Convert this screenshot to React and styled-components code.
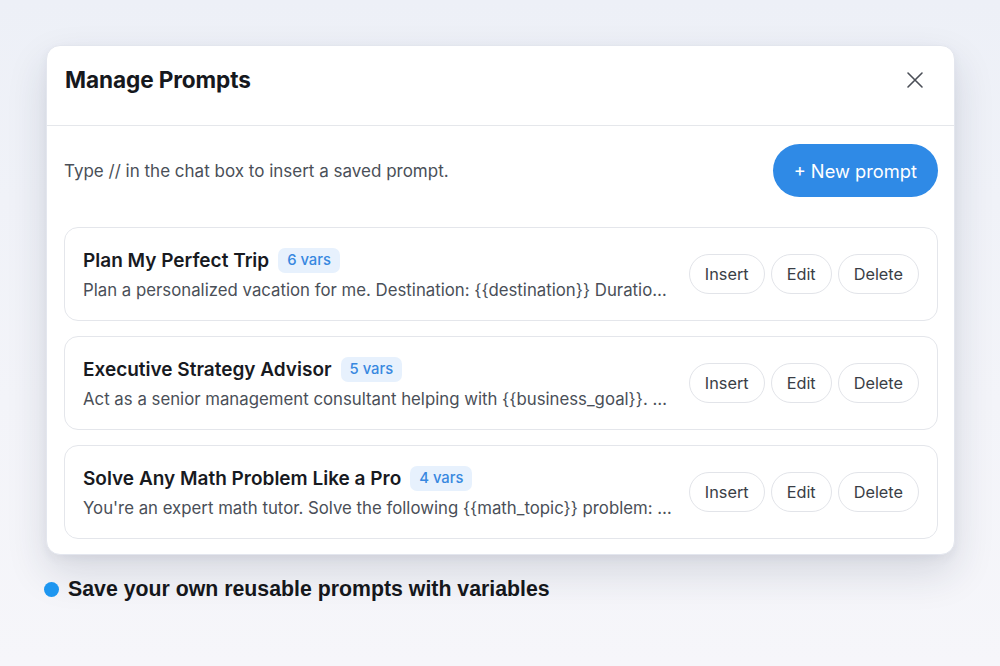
import React from "react";
import styled, { createGlobalStyle } from "styled-components";

const GlobalStyle = createGlobalStyle`
  html, body {
    margin: 0;
    padding: 0;
  }
  body {
    font-family: Inter, "Noto Sans", sans-serif;
    background: linear-gradient(180deg, #edf0f7 0%, #f3f4f9 60%, #f6f6fa 100%);
    min-height: 666px;
  }
`;

const Page = styled.div`
  width: 1000px;
  height: 666px;
  padding: 45px 0 0 46px;
  box-sizing: border-box;
`;

const Modal = styled.div`
  width: 909px;
  background: #fff;
  border-radius: 14px;
  border: 1px solid #e3e6ee;
  box-sizing: border-box;
  box-shadow: 0 18px 40px rgba(30, 40, 70, 0.14), 0 4px 10px rgba(30, 40, 70, 0.05);
  overflow: hidden;
`;

const Header = styled.div`
  height: 80px;
  box-sizing: border-box;
  display: flex;
  align-items: center;
  justify-content: space-between;
  padding: 0 27px 12px 18px;
  border-bottom: 1px solid #e5e7eb;
`;

const Title = styled.h2`
  margin: 0;
  font-size: 22.6px;
  font-weight: 700;
  color: #16181d;
  letter-spacing: -0.1px;
`;

const CloseButton = styled.button`
  border: 0;
  background: none;
  padding: 0;
  width: 24px;
  height: 24px;
  display: flex;
  align-items: center;
  justify-content: center;
  color: #4b4f57;
`;

const Body = styled.div`
  padding: 18px 16px 15px 17px;
`;

const Toolbar = styled.div`
  display: flex;
  align-items: center;
  justify-content: space-between;
  margin-bottom: 30px;
`;

const Hint = styled.p`
  margin: 0;
  font-size: 17px;
  color: #4a4f58;
`;

const PrimaryButton = styled.button`
  height: 53px;
  padding: 0 21px;
  border: 0;
  border-radius: 27px;
  background: #2f8ae6;
  color: #fff;
  font-family: inherit;
  font-size: 18.3px;
  font-weight: 400;
`;

const List = styled.div`
  display: flex;
  flex-direction: column;
  gap: 15px;
`;

const Card = styled.div`
  height: 94px;
  box-sizing: border-box;
  border: 1px solid #e4e6eb;
  border-radius: 14px;
  padding: 0 18px;
  display: flex;
  align-items: center;
  gap: 16px;
`;

const CardMain = styled.div`
  flex: 1;
  min-width: 0;
  display: flex;
  flex-direction: column;
  gap: 6px;
  padding-top: 2px;
`;

const TitleRow = styled.div`
  display: flex;
  align-items: center;
  gap: 9px;
  height: 25px;
`;

const CardTitle = styled.span`
  font-size: 19px;
  font-weight: 600;
  color: #181a1f;
`;

const Badge = styled.span`
  height: 25px;
  line-height: 25px;
  padding: 0 9px;
  border-radius: 7px;
  background: #e7f1fd;
  color: #3788e0;
  font-size: 14.8px;
  font-weight: 500;
`;

const Desc = styled.div`
  font-size: 16.8px;
  line-height: 23px;
  color: #4a4f58;
  white-space: nowrap;
  overflow: hidden;
  text-overflow: ellipsis;
`;

const Actions = styled.div`
  display: flex;
  gap: 6px;
  flex-shrink: 0;
`;

const PillButton = styled.button`
  height: 40px;
  line-height: 38px;
  padding: 0 15px;
  border: 1px solid #e2e4e9;
  border-radius: 20px;
  background: #fff;
  color: #3a3e46;
  font-family: inherit;
  font-size: 16.3px;
`;

const Caption = styled.div`
  display: flex;
  align-items: center;
  gap: 9px;
  margin: 22px 0 0 -2px;
`;

const Dot = styled.span`
  width: 15px;
  height: 15px;
  border-radius: 50%;
  background: #1d96f0;
`;

const CaptionText = styled.span`
  font-family: "Liberation Sans", Arial, sans-serif;
  font-size: 21.3px;
  font-weight: 700;
  color: #15171b;
`;

const prompts = [
  {
    title: "Plan My Perfect Trip",
    vars: 6,
    desc: "Plan a personalized vacation for me. Destination: {{destination}} Duration: {{duration}} Budget: {{budget}}",
  },
  {
    title: "Executive Strategy Advisor",
    vars: 5,
    desc: "Act as a senior management consultant helping with {{business_goal}}. Context: {{context}}",
  },
  {
    title: "Solve Any Math Problem Like a Pro",
    vars: 4,
    desc: "You're an expert math tutor. Solve the following {{math_topic}} problem: {{problem}}",
  },
];

const App = () => {
  return (
    <>
      <GlobalStyle />
      <Page>
        <Modal>
          <Header>
            <Title>Manage Prompts</Title>
            <CloseButton aria-label="Close">
              <svg width="18" height="18" viewBox="0 0 18 18" fill="none">
                <path d="M2 2L16 16M16 2L2 16" stroke="currentColor" strokeWidth="1.6" strokeLinecap="round" />
              </svg>
            </CloseButton>
          </Header>
          <Body>
            <Toolbar>
              <Hint>Type // in the chat box to insert a saved prompt.</Hint>
              <PrimaryButton>+ New prompt</PrimaryButton>
            </Toolbar>
            <List>
              {prompts.map((p) => (
                <Card key={p.title}>
                  <CardMain>
                    <TitleRow>
                      <CardTitle>{p.title}</CardTitle>
                      <Badge>{p.vars} vars</Badge>
                    </TitleRow>
                    <Desc>{p.desc}</Desc>
                  </CardMain>
                  <Actions>
                    <PillButton>Insert</PillButton>
                    <PillButton>Edit</PillButton>
                    <PillButton>Delete</PillButton>
                  </Actions>
                </Card>
              ))}
            </List>
          </Body>
        </Modal>
        <Caption>
          <Dot />
          <CaptionText>Save your own reusable prompts with variables</CaptionText>
        </Caption>
      </Page>
    </>
  );
};

export default App;
